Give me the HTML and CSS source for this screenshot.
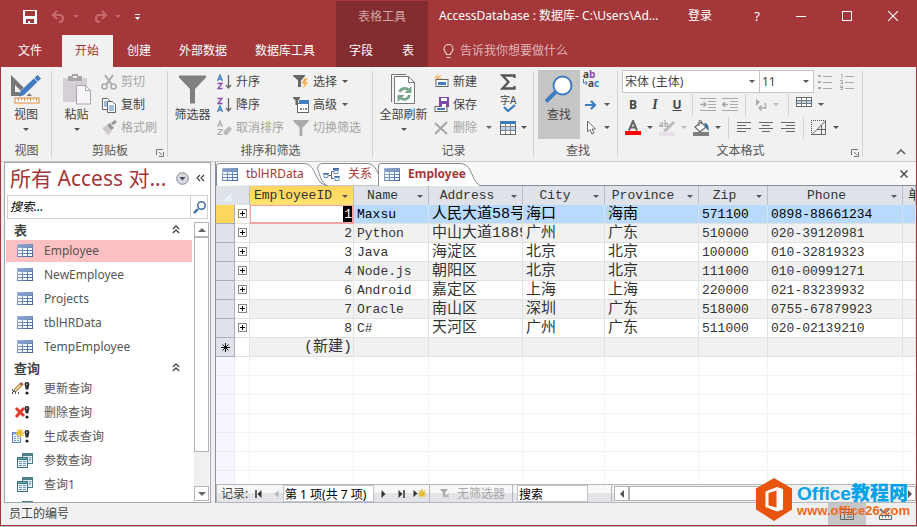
FILE: index.html
```html
<!DOCTYPE html>
<html lang="zh-CN">
<head>
<meta charset="utf-8">
<title>AccessDatabase</title>
<link rel="stylesheet" href="styles.css">
</head>
<body>
<svg class="defs" aria-hidden="true">
  <defs>
    <linearGradient id="sheet" x1="0" y1="0" x2="1" y2="1"><stop offset="0" stop-color="#a9bbd8"/><stop offset="1" stop-color="#3c5f96"/></linearGradient>
    <symbol id="i-table" viewBox="0 0 16 13">
      <rect width="16" height="13" fill="url(#sheet)"/><rect x="1" y="1" width="14" height="2" fill="#7f9cc9"/>
      <path d="M1 4h4v2H1zM6 4h4v2H6zM11 4h4v2h-4zM1 7h4v2H1zM6 7h4v2H6zM11 7h4v2h-4zM1 10h4v2H1zM6 10h4v2H6zM11 10h4v2h-4z" fill="#f4f8ff"/>
    </symbol>
    <symbol id="i-query" viewBox="0 0 16 15">
      <rect x="5" width="11" height="11" fill="#4d7f8b"/><path d="M6 3h9v7H6z" fill="#dfeaf5"/><path d="M12 5h2M12 7h2" stroke="#5f8fb0"/>
      <rect y="4" width="11" height="11" fill="#3c6f86"/><path d="M1 7h9v7H1z" fill="#f2f7fd"/><path d="M2 8.500h3M6 8.500h3M2 10.500h3M6 10.500h3M2 12.500h3M6 12.500h3" stroke="#6f93c0"/><path d="M1 5.500h9" stroke="#6db4ac"/>
    </symbol>
    <symbol id="i-bang" viewBox="0 0 6 13">
      <path d="M3 0c2 0 2.600 1.200 2.300 3L4.200 7.500H1.800L.7 3C.4 1.200 1 0 3 0z" fill="#2c2c2c"/><path d="M2 1.500h1.500v2H2z" fill="#999"/><circle cx="3" cy="11" r="1.600" fill="#222"/>
    </symbol>
    <symbol id="i-launch" viewBox="0 0 8 8"><path d="M.5 6V.5H7M3 3l3 3M7.500 3v4.500H3" fill="none" stroke="#777"/></symbol>
    <symbol id="i-chev2" viewBox="0 0 8 9"><path d="M.8 4L4 1l3.200 3M.8 8L4 5l3.200 3" fill="none" stroke="#444" stroke-width="1.300"/></symbol>
    <symbol id="i-funnel" viewBox="0 0 27 28"><path d="M0 0h27v2L16 13.500V28h-5V13.500L0 2z"/></symbol>
    <symbol id="i-grid" viewBox="0 0 16 14"><rect x=".5" y=".5" width="15" height="13" fill="#fff" stroke="#666"/><path d="M0 0h16v3H0z" fill="#3f7cc0"/><path d="M1 6h14v3H1z" fill="#bcd3ea"/><path d="M5.500 3v10M10.500 3v10M1 5.500h14M1 9.500h14" stroke="#888"/></symbol>
  </defs>
</svg>
<div class="window">
  <header class="header">
    <div class="quick">
      <button aria-label="保存"><svg width="14" height="14" viewBox="0 0 14 14"><path d="M0 0h14v14H0zM2 1v5h10V1zM3 9v4h2v-2h2v2h4V9z" fill="#fff" fill-rule="evenodd"/></svg></button>
      <button aria-label="撤消" class="dim"><svg width="15" height="13" viewBox="0 0 15 13"><path d="M6 1L2 5l4 4M2 5h7.500a3.700 3.700 0 0 1 0 7H8" fill="none" stroke="#c5696c" stroke-width="2.200"/></svg><i class="caret rose"></i></button>
      <button aria-label="恢复" class="dim"><svg width="15" height="13" viewBox="0 0 15 13"><path d="M9 1l4 4-4 4M13 5H5.500a3.700 3.700 0 0 0 0 7H7" fill="none" stroke="#c5696c" stroke-width="2.200"/></svg><i class="caret rose"></i></button>
      <button aria-label="自定义"><svg width="5" height="6" viewBox="0 0 5 6"><path d="M0 0h5v1H0zM0 3h5L2.500 6z" fill="#fff"/></svg></button>
    </div>
    <div class="context-title">表格工具</div>
    <div class="titlebar">
      <span class="title">AccessDatabase : 数据库- C:\Users\Ad...</span>
      <button class="login">登录</button>
      <button class="help" aria-label="帮助">?</button>
      <button aria-label="最小化"><svg width="10" height="10"><path d="M0 5.500h10" stroke="#fff"/></svg></button>
      <button aria-label="最大化"><svg width="10" height="10"><rect x=".5" y=".5" width="9" height="9" fill="none" stroke="#fff"/></svg></button>
      <button aria-label="关闭"><svg width="10" height="10"><path d="M0 0l10 10M10 0L0 10" stroke="#fff" stroke-width="1.100"/></svg></button>
    </div>
    <nav class="tabs">
      <a href="#">文件</a><a href="#" class="on">开始</a><a href="#">创建</a><a href="#">外部数据</a><a href="#">数据库工具</a>
    </nav>
    <nav class="context-tabs"><a href="#">字段</a><a href="#">表</a></nav>
    <button class="tell"><svg width="11" height="15" viewBox="0 0 11 15"><path d="M3.500 10.500C3.500 8.500 1 8 1 5a4.300 4.300 0 0 1 9 0c0 3-2.500 3.500-2.500 5.500zM3.500 13.500h4" fill="none" stroke="#eccfcf" stroke-width="1.200"/></svg>告诉我你想要做什么</button>
  </header>

  <section class="ribbon">
    <div class="group view">
      <div class="tools">
        <button class="big">
          <svg width="31" height="31" viewBox="0 0 31 31"><path d="M0 1l21 21H0zM4 11v7h7z" fill="#777" fill-rule="evenodd"/><path d="M28 3L11 21" stroke="#f1f1f1" stroke-width="8"/><path d="M26.500 1l3.500 3.500L13 21l-5 1.500L9.500 17z" fill="#3f7dc0"/><path d="M23 4l4 4" stroke="#f1f1f1"/><rect x="4" y="24" width="24" height="5" fill="#fff" stroke="#e08a3c"/><path d="M7.500 24v3M10.500 24v2M13.500 24v3M16.500 24v2M19.500 24v3M22.500 24v2M25.500 24v3" stroke="#e08a3c"/></svg>
          <span>视图</span><i class="caret"></i>
        </button>
      </div>
      <div class="label">视图</div>
    </div>
    <div class="group clip">
      <div class="tools">
        <button class="big">
          <svg width="28" height="31" viewBox="0 0 28 31"><path d="M0 4h24v24H0z" fill="#d5cfd6"/><path d="M5 2h4V0h6v2h4v5H5z" fill="#a9a5a9"/><path d="M10 2h4v2h-4z" fill="#eee"/><path d="M13.500 11.500h9l5 5V30h-14z" fill="#f8f5fa" stroke="#aaa4ad"/><path d="M22.500 11.500v5h5" fill="none" stroke="#aaa4ad"/></svg>
          <span>粘贴</span><i class="caret"></i>
        </button>
        <div class="col">
          <button class="cmd" disabled><svg width="16" height="16" viewBox="0 0 16 16"><path d="M4 1l7 10M12 1L5 11" stroke="#aaa" stroke-width="2"/><circle cx="3.500" cy="12.500" r="2.500" fill="none" stroke="#aaa" stroke-width="1.500"/><circle cx="12.500" cy="12.500" r="2.500" fill="none" stroke="#aaa" stroke-width="1.500"/></svg>剪切</button>
          <button class="cmd"><svg width="16" height="16" viewBox="0 0 16 16"><path d="M1.500 1.500h5l3 3v8h-8z" fill="#fff" stroke="#666"/><path d="M3 5h3M3 7h3M3 9h3" stroke="#3f7dc0"/><path d="M6.500 4.500h5l3 3v8h-8z" fill="#fff" stroke="#666"/><path d="M8 9h5M8 11h5M8 13h5" stroke="#3f7dc0"/></svg>复制</button>
          <button class="cmd" disabled><svg width="16" height="16" viewBox="0 0 16 16"><path d="M1 8l5-3 5 6-4 4z" fill="#cfc8cf"/><path d="M6 5l3-2 4 5-3 2z" fill="#999"/><path d="M11 4l4-3" stroke="#999" stroke-width="3"/></svg>格式刷</button>
        </div>
      </div>
      <div class="label">剪贴板</div>
      <button class="launch" aria-label="剪贴板选项"><svg width="8" height="8"><use href="#i-launch"/></svg></button>
    </div>
    <div class="group sort">
      <div class="tools">
        <button class="big"><svg width="27" height="28" fill="#808080"><use href="#i-funnel"/></svg><span>筛选器</span></button>
        <div class="col">
          <button class="cmd"><svg width="15" height="16" viewBox="0 0 15 16"><path d="M.5 7L3 1l2.500 6M1.500 5h3" fill="none" stroke="#3f7dc0" stroke-width="1.300"/><path d="M.5 9.500h4.500l-4 5H5.500" fill="none" stroke="#8a4da8" stroke-width="1.300"/><path d="M11.500 1v13M9 11l2.500 3L14 11" fill="none" stroke="#666" stroke-width="1.300"/></svg>升序</button>
          <button class="cmd"><svg width="15" height="16" viewBox="0 0 15 16"><path d="M.5 1.500h4.500l-4 5H5.500" fill="none" stroke="#8a4da8" stroke-width="1.300"/><path d="M.5 15L3 9l2.500 6M1.500 13h3" fill="none" stroke="#3f7dc0" stroke-width="1.300"/><path d="M11.500 1v13M9 11l2.500 3L14 11" fill="none" stroke="#666" stroke-width="1.300"/></svg>降序</button>
          <button class="cmd" disabled><svg width="15" height="16" viewBox="0 0 15 16"><path d="M.5 7L3 1l2.500 6M1.500 5h3M.5 9.500h4.500l-4 5H5.500" fill="none" stroke="#aaa" stroke-width="1.200"/><path d="M6 12l6-6 3 3-5 6H8z" fill="#bbb"/></svg>取消排序</button>
        </div>
        <div class="col">
          <button class="cmd"><svg width="16" height="16" viewBox="0 0 16 16"><path d="M0 1h12v1L8 6.500V13H5V6.500L0 2z" fill="#666"/><path d="M11 4h4l-2 4h3l-7 8 2-6H8z" fill="#f2b557" stroke="#f1f1f1" stroke-width=".6"/></svg>选择<i class="caret"></i></button>
          <button class="cmd"><svg width="16" height="16" viewBox="0 0 16 16"><path d="M0 0h7v1L5 3.500V8H2.500V3.500L0 1z" fill="#666"/><rect x="4.500" y="6.500" width="11" height="9" fill="#fff" stroke="#666"/><path d="M6 3h10v4H6z" fill="#3f7dc0"/><path d="M7 12h2M10 12h1M12 12h2" stroke="#555" stroke-width="1.500"/></svg>高级<i class="caret"></i></button>
          <button class="cmd" disabled><svg width="16" height="16" fill="#aaa"><use href="#i-funnel"/></svg>切换筛选</button>
        </div>
      </div>
      <div class="label">排序和筛选</div>
    </div>
    <div class="group records">
      <div class="tools">
        <button class="big">
          <svg width="25" height="31" viewBox="0 0 25 31"><path d="M.5 28V.5H15" fill="none" stroke="#777"/><path d="M3.500 2.500h14l6 6v21h-20z" fill="#fff" stroke="#777"/><path d="M17.500 2.500v6h6" fill="none" stroke="#777"/><path d="M8.500 18a5.500 5.500 0 0 1 9-2M18.500 21a5.500 5.500 0 0 1-9 3" fill="none" stroke="#7aa68b" stroke-width="2.800"/><path d="M20.500 12v7h-7zM6.500 28v-7h7z" fill="#7aa68b"/></svg>
          <span>全部刷新</span><i class="caret"></i>
        </button>
        <div class="col">
          <button class="cmd"><svg width="15" height="16" viewBox="0 0 15 16"><path d="M4 0v8M0 4h8M1 1l6 6M7 1L1 7" stroke="#f0b35a"/><rect x="2" y="5.500" width="12" height="7" fill="#fff" stroke="#666"/><path d="M4 8h8v3H4z" fill="#3f7dc0"/></svg>新建</button>
          <button class="cmd"><svg width="15" height="16" viewBox="0 0 15 16"><rect x="1" y="9.500" width="12" height="5" fill="#fff" stroke="#666"/><path d="M3 11h8v2H3z" fill="#3f7dc0"/><path d="M5 0h10v10H5z" fill="#7d4aa3"/><path d="M7 1h6v3H7zM8 7h4v3H8z" fill="#fff"/></svg>保存</button>
          <button class="cmd" disabled><svg width="15" height="14" viewBox="0 0 15 14"><path d="M1 2l12 11M13 1L1 13" stroke="#aaa" stroke-width="2.300"/></svg>删除<i class="caret far"></i></button>
        </div>
        <div class="col">
          <button class="cmd" aria-label="合计"><svg width="16" height="16" viewBox="0 0 16 16"><path d="M14.500 4V1.500H2.500L8.500 8l-6 6.500h12V12" fill="none" stroke="#555" stroke-width="2.300"/></svg></button>
          <button class="cmd spell" aria-label="拼写检查"><span>字A</span><svg width="13" height="8" viewBox="0 0 13 8"><path d="M1 3l4 4 7-6" fill="none" stroke="#3f7dc0" stroke-width="2.300"/></svg></button>
          <button class="cmd" aria-label="其他"><svg width="16" height="14"><use href="#i-grid"/></svg><i class="caret"></i></button>
        </div>
      </div>
      <div class="label">记录</div>
    </div>
    <div class="group find">
      <div class="tools">
        <button class="big on"><svg width="28" height="28" viewBox="0 0 28 28"><path d="M1 26l10-10" stroke="#3f7dc0" stroke-width="4"/><circle cx="17.500" cy="10" r="9" fill="#fff" stroke="#3f7dc0" stroke-width="2"/></svg><span>查找</span></button>
        <div class="col">
          <button class="cmd swap" aria-label="替换"><span>a<em>b</em></span><span><svg width="5" height="6" viewBox="0 0 5 6"><path d="M.5 0v4H4M2.500 2l2 2-2 2" fill="none" stroke="#3f7dc0"/></svg>a<u>c</u></span></button>
          <button class="cmd" aria-label="转至"><svg width="16" height="12" viewBox="0 0 16 12"><path d="M2 6h9M8 2l4 4-4 4" fill="none" stroke="#3f7dc0" stroke-width="2.200"/></svg><i class="caret"></i></button>
          <button class="cmd" aria-label="选择"><svg width="16" height="15" viewBox="0 0 16 15"><path d="M4.500 1v11l2.500-2.500L9 14l2-1-2-4h3.500z" fill="#fff" stroke="#666"/></svg><i class="caret"></i></button>
        </div>
      </div>
      <div class="label">查找</div>
    </div>
    <div class="group text">
      <div class="tools rows">
        <div class="row">
          <label class="combo font"><input value="宋体 (主体)" aria-label="字体"><i class="caret"></i></label><label class="combo size"><input value="11" aria-label="字号"><i class="caret"></i></label>
          <button class="ic" aria-label="项目符号"><svg width="14" height="16" viewBox="0 0 14 16"><path d="M0 2h3M0 8h3M0 14h3" stroke="#aaa" stroke-width="2"/><path d="M5 2.500h9M5 8.500h9M5 14.500h9" stroke="#aaa"/></svg></button>
          <button class="ic" aria-label="编号"><svg width="14" height="16" viewBox="0 0 14 16"><path d="M1 .5h1v4M0 6.500h2.500v2l-2 1H3M0 12h2.500v3.500H0M0 13.500h2" stroke="#aaa" fill="none"/><path d="M5 2.500h9M5 8.500h9M5 14.500h9" stroke="#aaa"/></svg></button>
        </div>
        <div class="row">
          <button class="ic bold">B</button><button class="ic ital">I</button><button class="ic under">U</button>
          <i class="bar"></i>
          <button class="ic" aria-label="增加缩进"><svg width="16" height="13" viewBox="0 0 16 13"><path d="M0 .5h16M8 3.500h8M8 6.500h8M8 9.500h8M0 12.500h16" stroke="#aaa"/><path d="M0 6.500h6M3.500 4L6 6.500 3.500 9" fill="none" stroke="#aaa" stroke-width="1.600"/></svg></button>
          <button class="ic" aria-label="减少缩进"><svg width="16" height="13" viewBox="0 0 16 13"><path d="M0 .5h16M8 3.500h8M8 6.500h8M8 9.500h8M0 12.500h16" stroke="#aaa"/><path d="M6 6.500H0M3 4L.8 6.500 3 9" fill="none" stroke="#aaa" stroke-width="1.600"/></svg></button>
          <i class="bar"></i>
          <button class="ic wide" aria-label="文字方向"><svg width="12" height="12" viewBox="0 0 12 12"><path d="M1 0l4 3-4 4z" fill="#aaa"/><path d="M10.500 4v5H4M6.500 6.500L4 9l2.500 2.500" fill="none" stroke="#aaa" stroke-width="1.500"/></svg><i class="caret pale"></i></button>
          <i class="bar"></i>
          <button class="ic wide" aria-label="网格线"><svg width="16" height="16" viewBox="0 0 16 16"><rect x=".5" y=".5" width="15" height="9" fill="#fff" stroke="#666"/><path d="M1 4h14v3H1z" fill="#bcd3ea"/><path d="M5.500 1v8M10.500 1v8M1 3.500h14M1 6.500h14" stroke="#777"/></svg><i class="caret"></i></button>
        </div>
        <div class="row">
          <button class="ic wide" aria-label="字体颜色"><svg width="16" height="15" viewBox="0 0 16 15"><path d="M4 10.500L8 1l4 9.500M5.500 7.500h5" fill="none" stroke="#666" stroke-width="2"/><path d="M0 11h16v4H0z" fill="red"/></svg><i class="caret"></i></button>
          <button class="ic wide" aria-label="突出显示"><svg width="16" height="16" viewBox="0 0 16 16"><path d="M1 3h2.500v3.500H1V5h2M6 0v6.500h2.500v-3H6" fill="none" stroke="#aaa" stroke-width="1.200"/><path d="M15 2L8 9l-3 2" stroke="#bbb" stroke-width="3"/><path d="M0 12h16v4H0z" fill="#e6dfe8"/></svg><i class="caret pale"></i></button>
          <button class="ic wide" aria-label="背景色"><svg width="16" height="16" viewBox="0 0 16 16"><path d="M2 7l6-5 5 5-6 5z" fill="#fff" stroke="#666" stroke-width="1.200"/><path d="M6 6V1.500C6 0 8.500 0 8.500 1.500V4" fill="none" stroke="#666"/><path d="M11 3c4 0 5 3 4.500 8L13 8z" fill="#3f6fa8"/><path d="M0 12h16v4H0z" fill="#808080"/></svg><i class="caret"></i></button>
          <i class="bar"></i>
          <button class="ic" aria-label="左对齐"><svg width="14" height="11"><path d="M0 .5h14M0 3.500h9M0 6.500h14M0 9.500h9" stroke="#666"/></svg></button>
          <button class="ic" aria-label="居中"><svg width="14" height="11"><path d="M0 .5h14M3 3.500h8M0 6.500h14M3 9.500h8" stroke="#666"/></svg></button>
          <button class="ic" aria-label="右对齐"><svg width="14" height="11"><path d="M0 .5h14M5 3.500h9M0 6.500h14M5 9.500h9" stroke="#666"/></svg></button>
          <i class="bar"></i>
          <button class="ic wide" aria-label="可选行颜色"><svg width="16" height="15" viewBox="0 0 16 15"><path d="M0 .5h15M.5 0v15" stroke="#555" stroke-dasharray="1 1"/><path d="M1 14.500L14.500 1v13.500zM10.500 5v9M6 9.500h8" fill="none" stroke="#666"/></svg><i class="caret"></i></button>
        </div>
      </div>
      <div class="label">文本格式</div>
      <button class="launch" aria-label="文本格式选项"><svg width="8" height="8"><use href="#i-launch"/></svg></button>
    </div>
    <button class="collapse" aria-label="折叠功能区"><svg width="10" height="6"><path d="M1 5l4-4 4 4" fill="none" stroke="#666" stroke-width="1.700"/></svg></button>
  </section>

  <main class="body">
    <aside class="nav">
      <div class="nav-head">
        <h1>所有 Access 对...</h1>
        <button aria-label="菜单"><svg width="13" height="13"><circle cx="6.500" cy="6.500" r="5.800" fill="#d8d9dd" stroke="#888b94"/><path d="M3.500 5h6l-3 3.500z" fill="#444b5c"/></svg></button>
        <button aria-label="折叠"><svg width="9" height="8"><path d="M4 1L1 4l3 3M8 1L5 4l3 3" fill="none" stroke="#444" stroke-width="1.200"/></svg></button>
      </div>
      <div class="search"><input placeholder="搜索..." aria-label="搜索对象"><button aria-label="搜索"><svg width="13" height="13" viewBox="0 0 13 13"><path d="M1 12l4-4" stroke="#3c6ca8" stroke-width="2.400"/><circle cx="8.500" cy="4.500" r="3.700" fill="#fff" stroke="#3c6ca8" stroke-width="1.500"/></svg></button></div>
      <div class="nav-body">
        <div class="list">
          <h2>表<svg width="8" height="9"><use href="#i-chev2"/></svg></h2>
          <a href="#" class="on"><svg width="16" height="13"><use href="#i-table"/></svg>Employee</a>
          <a href="#"><svg width="16" height="13"><use href="#i-table"/></svg>NewEmployee</a>
          <a href="#"><svg width="16" height="13"><use href="#i-table"/></svg>Projects</a>
          <a href="#"><svg width="16" height="13"><use href="#i-table"/></svg>tblHRData</a>
          <a href="#"><svg width="16" height="13"><use href="#i-table"/></svg>TempEmployee</a>
          <h2>查询<svg width="8" height="9"><use href="#i-chev2"/></svg></h2>
          <a href="#" class="act"><svg width="18" height="13" viewBox="0 0 18 13"><path d="M0 8h1M0 11h1M3 11h1M6 11h1M1 9.500h1" stroke="#222" stroke-width="1.400"/><path d="M3 8.500L9 2.500" stroke="#8a6a3a" stroke-width="3.600"/><path d="M3 8.500L9 2.500" stroke="#f0d489" stroke-width="2"/><path d="M8.500 3L10.500 1" stroke="#c65b4e" stroke-width="3.400"/><path d="M2 10l.5-2 1.500 1.500z" fill="#222"/><use href="#i-bang" x="12" width="6" height="13"/></svg>更新查询</a>
          <a href="#" class="act"><svg width="18" height="13" viewBox="0 0 18 13"><path d="M4 2l8 8M12 2l-8 9" stroke="#e0382c" stroke-width="3"/><use href="#i-bang" x="12" width="6" height="13"/></svg>删除查询</a>
          <a href="#" class="act"><svg width="18" height="14" viewBox="0 0 18 14"><rect x=".5" y="3.500" width="8" height="10" fill="#f4f8ff" stroke="#5b82bf"/><path d="M1 4.500h7" stroke="#7fa3d8" stroke-width="2"/><path d="M2 7.500h2M5 7.500h2M2 9.500h2M5 9.500h2M2 11.500h2M5 11.500h2" stroke="#7d9cc9"/><path d="M8 0v8M4 4h8M5 1l6 6M11 1L5 7" stroke="#e9bf2d" stroke-width="1.400"/><use href="#i-bang" x="12" y="1" width="6" height="13"/></svg>生成表查询</a>
          <a href="#"><svg width="16" height="15"><use href="#i-query"/></svg>参数查询</a>
          <a href="#"><svg width="16" height="15"><use href="#i-query"/></svg>查询1</a>
          <a href="#" aria-label="查询"><svg width="16" height="15"><use href="#i-query"/></svg></a>
        </div>
        <div class="vscroll"><button aria-label="向上"><i class="tri up"></i></button><div class="thumb"></div><button aria-label="向下"><i class="tri down"></i></button></div>
      </div>
    </aside>

    <section class="doc">
      <div class="doc-tabs">
        <button class="tab t1"><svg class="shape" width="112" height="24" viewBox="0 0 112 24"><path d="M.5 24V4Q.5 1.500 3 1.500H88C98 1.500 98 14 105 21L110 23.500" fill="#fff" stroke="#868d96"/></svg><svg width="16" height="13"><use href="#i-table"/></svg><span>tblHRData</span></button>
        <button class="tab t2"><svg class="shape" width="67" height="24" viewBox="0 0 67 24"><path d="M11 24C4 22 2 10 .5 6Q1 1.500 6 1.500H50C58 1.500 60 10 61.500 12V24z" fill="#fff" stroke="#868d96"/></svg><svg width="17" height="13" viewBox="0 0 17 13"><path d="M5 7.500h4M8.500 3v8M8 3.500h3M8 10.500h3" stroke="#666" fill="none"/><path d="M0 5h6v1H0zM10 0h6v2h-6zM11 8h6v1h-6z" fill="#3f6fb0"/><path d="M1 6.500h4v3H1zM11 2.500h4v3h-4zM12 9.500h4v3h-4z" fill="#fff" stroke="#6d8fbf"/></svg><span>关系</span></button>
        <button class="tab t3"><svg class="shape" width="104" height="24" viewBox="0 0 104 24"><path d="M.5 24V4Q.5 1.500 3 1.500H82C93 1.500 93 14 98 20Q100 23 103 24" fill="#fff" stroke="#8c8784"/></svg><svg width="16" height="13"><use href="#i-table"/></svg><span>Employee</span></button>
        <button class="close" aria-label="关闭文档"><svg width="8" height="8"><path d="M.5.5l7 7M7.500.5l-7 7" stroke="#444" stroke-width="1.400"/></svg></button>
      </div>
      <div class="sheet">
        <table>
          <colgroup><col class="c-sel"><col class="c-exp"><col class="c-id"><col class="c-name"><col class="c-addr"><col class="c-city"><col class="c-addr"><col class="c-zip"><col class="c-phone"><col></colgroup>
          <thead><tr>
            <th class="corner"><svg width="11" height="11"><path d="M11 0v11H0z" fill="#edf3fb" stroke="#c3ccd8" stroke-width=".5"/></svg></th><th></th>
            <th class="cur"><div>EmployeeID<i class="caret"></i></div></th><th><div>Name<i class="caret"></i></div></th><th><div>Address<i class="caret"></i></div></th><th><div>City<i class="caret"></i></div></th><th><div>Province<i class="caret"></i></div></th><th><div>Zip<i class="caret"></i></div></th><th><div>Phone<i class="caret"></i></div></th><th class="last">单</th>
          </tr></thead>
          <tbody>
            <tr class="cur"><td></td><td><button class="plus" aria-label="展开"></button></td><td><mark>1</mark></td><td>Maxsu</td><td class="zh">人民大道58号</td><td class="zh">海口</td><td class="zh">海南</td><td>571100</td><td>0898-88661234</td><td></td></tr>
            <tr><td></td><td><button class="plus" aria-label="展开"></button></td><td>2</td><td>Python</td><td class="zh">中山大道1889号</td><td class="zh">广州</td><td class="zh">广东</td><td>510000</td><td>020-39120981</td><td></td></tr>
            <tr><td></td><td><button class="plus" aria-label="展开"></button></td><td>3</td><td>Java</td><td class="zh">海淀区</td><td class="zh">北京</td><td class="zh">北京</td><td>100000</td><td>010-32819323</td><td></td></tr>
            <tr><td></td><td><button class="plus" aria-label="展开"></button></td><td>4</td><td>Node.js</td><td class="zh">朝阳区</td><td class="zh">北京</td><td class="zh">北京</td><td>111000</td><td>010-00991271</td><td></td></tr>
            <tr><td></td><td><button class="plus" aria-label="展开"></button></td><td>6</td><td>Android</td><td class="zh">嘉定区</td><td class="zh">上海</td><td class="zh">上海</td><td>220000</td><td>021-83239932</td><td></td></tr>
            <tr><td></td><td><button class="plus" aria-label="展开"></button></td><td>7</td><td>Oracle</td><td class="zh">南山区</td><td class="zh">深圳</td><td class="zh">广东</td><td>518000</td><td>0755-67879923</td><td></td></tr>
            <tr><td></td><td><button class="plus" aria-label="展开"></button></td><td>8</td><td>C#</td><td class="zh">天河区</td><td class="zh">广州</td><td class="zh">广东</td><td>511000</td><td>020-02139210</td><td></td></tr>
            <tr class="new"><td class="star"><svg width="9" height="9"><path d="M4.500 0v9M0 4.500h9M1.500 1.500l6 6M7.500 1.500l-6 6" stroke="#111"/></svg></td><td></td><td class="zh">(新建)</td><td></td><td></td><td></td><td></td><td></td><td></td><td></td></tr>
          </tbody>
          <tbody class="blank">
            <tr><td></td><td></td><td></td><td></td><td></td><td></td><td></td><td></td><td></td><td></td></tr>
            <tr><td></td><td></td><td></td><td></td><td></td><td></td><td></td><td></td><td></td><td></td></tr>
            <tr><td></td><td></td><td></td><td></td><td></td><td></td><td></td><td></td><td></td><td></td></tr>
            <tr><td></td><td></td><td></td><td></td><td></td><td></td><td></td><td></td><td></td><td></td></tr>
            <tr><td></td><td></td><td></td><td></td><td></td><td></td><td></td><td></td><td></td><td></td></tr>
            <tr><td></td><td></td><td></td><td></td><td></td><td></td><td></td><td></td><td></td><td></td></tr>
            <tr><td></td><td></td><td></td><td></td><td></td><td></td><td></td><td></td><td></td><td></td></tr>
          </tbody>
        </table>
      </div>
      <div class="recnav">
        <label for="rec">记录:</label>
        <button aria-label="第一条"><svg width="7" height="8"><path d="M1 0v8" stroke="#333" stroke-width="1.500"/><path d="M6.500 0v8L2.500 4z" fill="#333"/></svg></button>
        <button aria-label="上一条"><svg width="5" height="8"><path d="M4.500 0v8L.5 4z" fill="#b5b8be"/></svg></button>
        <input id="rec" value="第 1 项(共 7 项)">
        <button aria-label="下一条"><svg width="5" height="8"><path d="M.5 0v8l4-4z" fill="#333"/></svg></button>
        <button aria-label="最后一条"><svg width="7" height="8"><path d="M6 0v8" stroke="#333" stroke-width="1.500"/><path d="M.5 0v8l4-4z" fill="#333"/></svg></button>
        <button aria-label="新记录"><svg width="13" height="9"><path d="M.5 1v7l4-3.500z" fill="#333"/><path d="M9 0v9M5 4.500h8M6 1.500l6 6M12 1.500l-6 6" stroke="#e5bd32" stroke-width="1.300"/></svg></button>
        <div class="filter"><svg width="9" height="9"><path d="M0 0h8L5 3.500V8H3V3.500z" fill="#aaa"/><path d="M5 5l4 4M9 5L5 9" stroke="#aaa"/></svg>无筛选器</div>
        <div class="find-box"><input value="搜索" aria-label="搜索记录"></div>
        <div class="hscroll"><button aria-label="向左"><i class="tri left"></i></button><div class="thumb"></div><button aria-label="向右"><i class="tri right"></i></button></div>
      </div>
    </section>
  </main>

  <footer class="status"><span>员工的编号</span>
    <button class="on" aria-label="数据表视图"><svg width="14" height="11"><path d="M.5.5h13v10H.5zM.5 3.500h13M4.500 3.500v7M7 5.500h5M7 8h5" fill="none" stroke="#666"/></svg></button>
    <button aria-label="设计视图"><svg width="13" height="12"><path d="M1 1l4 4M11 0L6 5" stroke="#777" stroke-width="2"/><path d="M.5 7.500h12v4H.5zM3.500 7.500v2M6.500 7.500v2M9.500 7.500v2" fill="none" stroke="#666"/></svg></button>
  </footer>
</div>
<div class="brand">
  <svg width="36" height="43" viewBox="0 0 36 43"><path d="M18 0l18 10.500v21L18 43 0 31.500v-21z" fill="#e8530e"/><path d="M9.500 13.500L21 9l6 2v20.500l-6 2-11.500-4.500z" fill="#fff"/><path d="M12.500 15l8-2.500v17l-8-2z" fill="#e8530e"/></svg>
  <div><strong>Office教程网</strong><span>www.office26.com</span></div>
</div>
</body>
</html>
```
FILE: styles.css
```css
* { box-sizing: border-box; }
body { margin: 0; font: 12px/16px "Noto Sans", "Noto Sans CJK SC", sans-serif; color: #444; background: #b9b9b9; }
button, input { font: inherit; color: inherit; background: none; border: 0; padding: 0; margin: 0; }
input { min-width: 0; }
button { display: flex; align-items: center; justify-content: center; white-space: nowrap; }
a { color: inherit; text-decoration: none; }
svg { display: block; flex: none; }
.defs { position: absolute; width: 0; height: 0; }
.window { height: calc(100vh - 1px); display: flex; flex-direction: column; border: 1px solid #a4373a; border-top: 0; background: #f1f1f1; overflow: hidden; }
.caret { flex: none; width: 0; height: 0; border: 3px solid transparent; border-top-color: #555; border-bottom: 0; }
.caret.rose { border-top-color: #c5696c; }
.caret.pale { border-top-color: #bbb; }

/* title bar and ribbon tabs */
.header { flex: none; display: grid; grid-template-columns: 335px 92px minmax(0, 1fr); grid-template-rows: 35px 32px; background: #a4373a; color: #fff; }
.quick { display: flex; align-items: center; gap: 14px; padding: 0 0 2px 22px; }
.quick button { gap: 7px; }
.context-title { display: flex; align-items: center; justify-content: center; padding-bottom: 2px; background: #832c2f; color: #d3a3a5; border-top: 1px solid #a4373a; }
.titlebar { display: flex; align-items: center; padding-bottom: 4px; }
.title { flex: 1; padding-left: 11px; white-space: nowrap; overflow: hidden; text-overflow: ellipsis; }
.titlebar button { width: 46px; height: 30px; }
.titlebar .login { width: 72px; }
.titlebar .help { width: 42px; font-size: 13px; }
.tabs { display: flex; padding-left: 3px; }
.tabs a, .context-tabs a { display: flex; align-items: center; padding: 0 14px; white-space: nowrap; }
.tabs a.on { background: #f1f1f1; color: #a4373a; margin: 0 0 0 6px; padding: 0 14px 0 13px; }
.context-tabs { display: flex; background: #832c2f; }
.context-tabs a { padding-left: 13px; }
.context-tabs a + a { padding-left: 15px; }
.tell { justify-content: flex-start; gap: 6px; padding-left: 15px; color: #dfb5b6; }

/* ribbon */
.ribbon { flex: none; display: flex; height: 95px; padding-top: 3px; border-bottom: 1px solid #c9c9c9; }
.group { position: relative; flex: none; display: flex; flex-direction: column; }
.group::after { content: ""; position: absolute; right: 0; top: 1px; bottom: 4px; width: 1px; background: #d2d2d2; }
.view { width: 51px; }
.clip { width: 116px; }
.sort { width: 205px; }
.records { width: 161px; }
.find { width: 84px; }
.text { width: 245px; }
.tools { display: flex; height: 69px; }
.label { text-align: center; line-height: 16px; margin-top: 4px; color: #555; }
.big { flex: none; flex-direction: column; justify-content: flex-start; height: 69px; padding-top: 4px; width: 50px; }
.big span { margin-top: auto; }
.big svg { height: 31px; margin-bottom: -2px; }
.big .caret { margin: 5px 0 8px; }
.big span:last-child { margin-bottom: 16px; }
.col { display: grid; grid-template-rows: repeat(3, 23px); }
.cmd { justify-content: flex-start; gap: 4px; }
.cmd .caret { margin-left: 1px; }
.cmd .caret.far { margin-left: 5px; border-top-color: #666; }
.cmd:disabled { color: #a5a5a5; }
.clip .big { width: 49px; }
.sort .big { width: 49px; }
.sort .col { margin-right: 9px; }
.sort .col + .col { margin: 0; }
.records .big { width: 61px; }
.records .col + .col { margin-left: 8px; }
.spell { position: relative; align-items: flex-start; }
.spell span { font-size: 10px; line-height: 14px; }
.spell svg { position: absolute; left: 3px; top: 11px; }
.find { padding-left: 4px; }
.find .big { width: 42px; margin-right: 3px; }
.big.on { background: #c6c6c6; }
.swap { flex-direction: column; align-items: flex-start; gap: 0; font-size: 10px; font-weight: 700; line-height: 9px; }
.swap span { display: flex; }
.swap em { font-style: normal; color: #8a4da8; }
.swap u { text-decoration: none; color: #3f7dc0; }
.launch { position: absolute; right: 4px; bottom: 4px; }
.collapse { margin: auto 10px 6px auto; }
.rows { flex-direction: column; padding-left: 4px; }
.row { display: flex; align-items: center; height: 23px; }
.combo { display: flex; align-items: center; height: 23px; border: 1px solid #c6c6c6; background: #fff; padding: 0 4px 0 2px; }
.combo input { flex: 1; }
.font { width: 138px; }
.size { width: 55px; margin-left: -1px; }
.ic { flex: none; width: 22px; height: 22px; }
.ic.wide { width: 34px; gap: 6px; }
.bar { flex: none; width: 1px; height: 22px; margin: 0 4px; background: #d2d2d2; }
.bold, .ital, .under { font-weight: 700; }
.ital { font-style: italic; font-family: "Liberation Serif", serif; font-size: 14px; }
.under { text-decoration: underline; }

/* navigation pane */
.body { flex: 1; min-height: 0; display: flex; padding-left: 3px; }
.nav { flex: none; width: 207px; display: flex; flex-direction: column; background: #fff; border: 1px solid #a0a6ae; }
.nav-head { display: flex; align-items: center; height: 32px; padding: 0 5px 2px 5px; color: #a4373a; gap: 7px; }
.nav-head h1 { flex: 1; margin: 0; font-size: 21px; line-height: 30px; font-weight: 400; white-space: nowrap; }
.search { flex: none; display: flex; height: 24px; margin: 0 2px; border: 1px solid #d0d0d0; }
.search input { flex: 1; padding: 0 2px; font-style: italic; }
.search input::placeholder { color: #000; opacity: 1; }
.search button { width: 17px; border-left: 1px solid #d0d0d0; }
.nav-body { flex: 1; min-height: 0; display: flex; padding-top: 3px; }
.list { flex: 1; overflow: hidden; padding-left: 1px; color: #555; }
.list h2 { display: flex; align-items: center; justify-content: space-between; height: 17px; margin: 0; padding: 0 12px 2px 8px; font-size: 13px; color: #444; }
.list a { display: flex; align-items: center; gap: 11px; height: 22px; margin-top: 2px; padding-left: 11px; }
.list h2 + a { margin-top: 1px; }
.list a + h2 { margin-top: 2px; }
.list a svg { margin-bottom: 2px; }
.list a.on { background: #fec1c3; }
.list a.act { padding-left: 6px; gap: 14px; }
.vscroll { flex: none; width: 15px; margin: 0 1px 1px 2px; display: flex; flex-direction: column; background: #f0f0f0; }
.vscroll button, .vscroll .thumb, .hscroll button, .hscroll .thumb { background: #fff; border: 1px solid #b4b4b4; }
.vscroll button { height: 15px; }
.vscroll .thumb { flex: 1; }
.vscroll button:last-child { margin-top: 34px; }
.tri { width: 0; height: 0; border: 4px solid transparent; }
.tri.up { border-bottom-color: #666; border-top: 0; }
.tri.down { border-top-color: #666; border-bottom: 0; }
.tri.left { border-right-color: #555; border-left: 0; }
.tri.right { border-left-color: #555; border-right: 0; }

/* document tabs */
.doc { flex: 1; min-width: 0; display: flex; flex-direction: column; margin-left: 4px; border-left: 1px solid #8c939b; background: #fff; }
.doc-tabs { flex: none; display: flex; height: 24px; background: #f8f8f8; border-bottom: 1px solid #868d96; }
.tab { position: relative; justify-content: flex-start; gap: 8px; padding-left: 6px; height: 24px; color: #a4373a; }
.tab span, .tab svg { position: relative; }
.tab .shape { position: absolute; left: 0; top: 0; }
.t1 { width: 101px; z-index: 1; }
.t2 { width: 61px; }
.t3 { width: 104px; font-weight: 700; z-index: 1; }
.close { margin: 0 8px 0 auto; }

/* datasheet */
.sheet { flex: 1; min-height: 0; overflow: hidden; }
table { width: 100%; table-layout: fixed; border-collapse: separate; border-spacing: 0; font: 13px/18px "Liberation Mono", "Noto Sans CJK SC", monospace; color: #333; }
.c-sel { width: 19px; }
.c-exp { width: 15px; }
.c-id { width: 104px; }
.c-name { width: 75px; }
.c-addr { width: 94px; }
.c-city { width: 82px; }
.c-zip { width: 69px; }
.c-phone { width: 135px; }
th { height: 19px; padding: 1px 0 0; font-weight: 400; background: #dfe2e8; border-right: 1px solid #b8bec7; overflow: hidden; white-space: nowrap; }
th:first-child { border: 0; }
th div { display: grid; grid-template-columns: 1fr 17px; align-items: center; justify-items: center; }
th.cur { background: linear-gradient(#ffd45c, #ffe471); }
th.last { text-align: left; padding-left: 5px; }
.corner svg { margin: 0 3px 0 auto; }
td { height: 19px; padding: 2px 0 0 3px; line-height: 16px; border-right: 1px solid #e1e1e1; border-bottom: 1px solid #e1e1e1; overflow: hidden; white-space: nowrap; }
td.zh { font-size: 15px; }
tr:nth-child(even) td { background: #f1f1f1; }
tbody td:nth-child(3) { text-align: right; padding-right: 1px; }
tbody td:first-child, tbody tr:nth-child(even) td:first-child { background: #dfe2e8; border-color: #a9afb8; }
tbody td:nth-child(2) { padding: 0 0 0 3px; vertical-align: top; background: #fff; }
tr.cur td { background: #b8daff; color: #000; }
tbody tr.cur td:first-child { background: #ffd65c; }
tbody tr.cur td:nth-child(2), tbody tr.cur td:nth-child(3) { background: #fff; }
tr.cur td:nth-child(3) { padding-top: 0; box-shadow: inset 0 0 0 1px #f3a3a5; border-color: #f3a3a5; }
mark { display: block; width: 9px; height: 16px; line-height: 18px; margin-left: auto; background: #000; color: #fff; }
.plus { width: 9px; height: 9px; margin-top: 4px; border: 1px solid #888; background: linear-gradient(#000, #000) center / 5px 1px no-repeat, linear-gradient(#000, #000) center / 1px 5px no-repeat, #fff; }
td.star { padding-top: 0; }
.star svg { margin-left: 2px; }
.blank tr td, .blank tr:nth-child(even) td { background: #fff; border-color: #f3f3f3; }
.blank tr td:first-child, .blank tr:nth-child(even) td:first-child { background: #f6f6ff; border-color: #ebebf2; }

/* record navigator */
.recnav { flex: none; display: flex; align-items: center; height: 19px; border: 1px solid #b4b7bd; border-right: 0; background: linear-gradient(#f7f7f8 50%, #e2e4e8 50%); white-space: nowrap; }
.recnav label { width: 32px; padding-left: 4px; }
.recnav > button { width: 18px; height: 16px; }
.recnav input { height: 17px; border: 1px solid #c0c3c8; background: #fff; color: #000; padding: 0 1px; }
#rec { width: 91px; margin: 0 0 0 -2px; }
.recnav > button:nth-of-type(n+3) { width: 18px; }
.filter { display: flex; align-items: center; gap: 8px; height: 17px; padding: 0 7px 0 10px; margin-left: 1px; border: 1px solid #b4b7bd; border-width: 0 1px; color: #aaa; }
.find-box { display: flex; width: 99px; padding-left: 4px; border-right: 1px solid #b4b7bd; }
.find-box input { width: 71px; }
.hscroll { flex: 1; display: flex; height: 17px; margin-left: 2px; padding: 1px 0; background: #f0f0f0; }
.hscroll button { width: 15px; }
.hscroll button:last-child { width: 12px; }
.hscroll .thumb { flex: 1; margin-right: 132px; }

.status { flex: none; display: flex; align-items: center; height: 22px; padding: 0 12px 0 8px; }
.status span { margin-right: auto; }
.status button { width: 38px; height: 22px; }
.status button.on { background: #c6c6c6; }

.brand { position: absolute; right: 7px; bottom: 6px; display: flex; align-items: center; gap: 5px; font-family: "Liberation Sans", "Noto Sans CJK SC", sans-serif; font-weight: 700; white-space: nowrap; }
.brand strong, .brand span { display: block; }
.brand strong { font-size: 19px; line-height: 21px; color: #00a2e8; }
.brand span { font-size: 13px; line-height: 13px; color: #ee6a1c; }
```
